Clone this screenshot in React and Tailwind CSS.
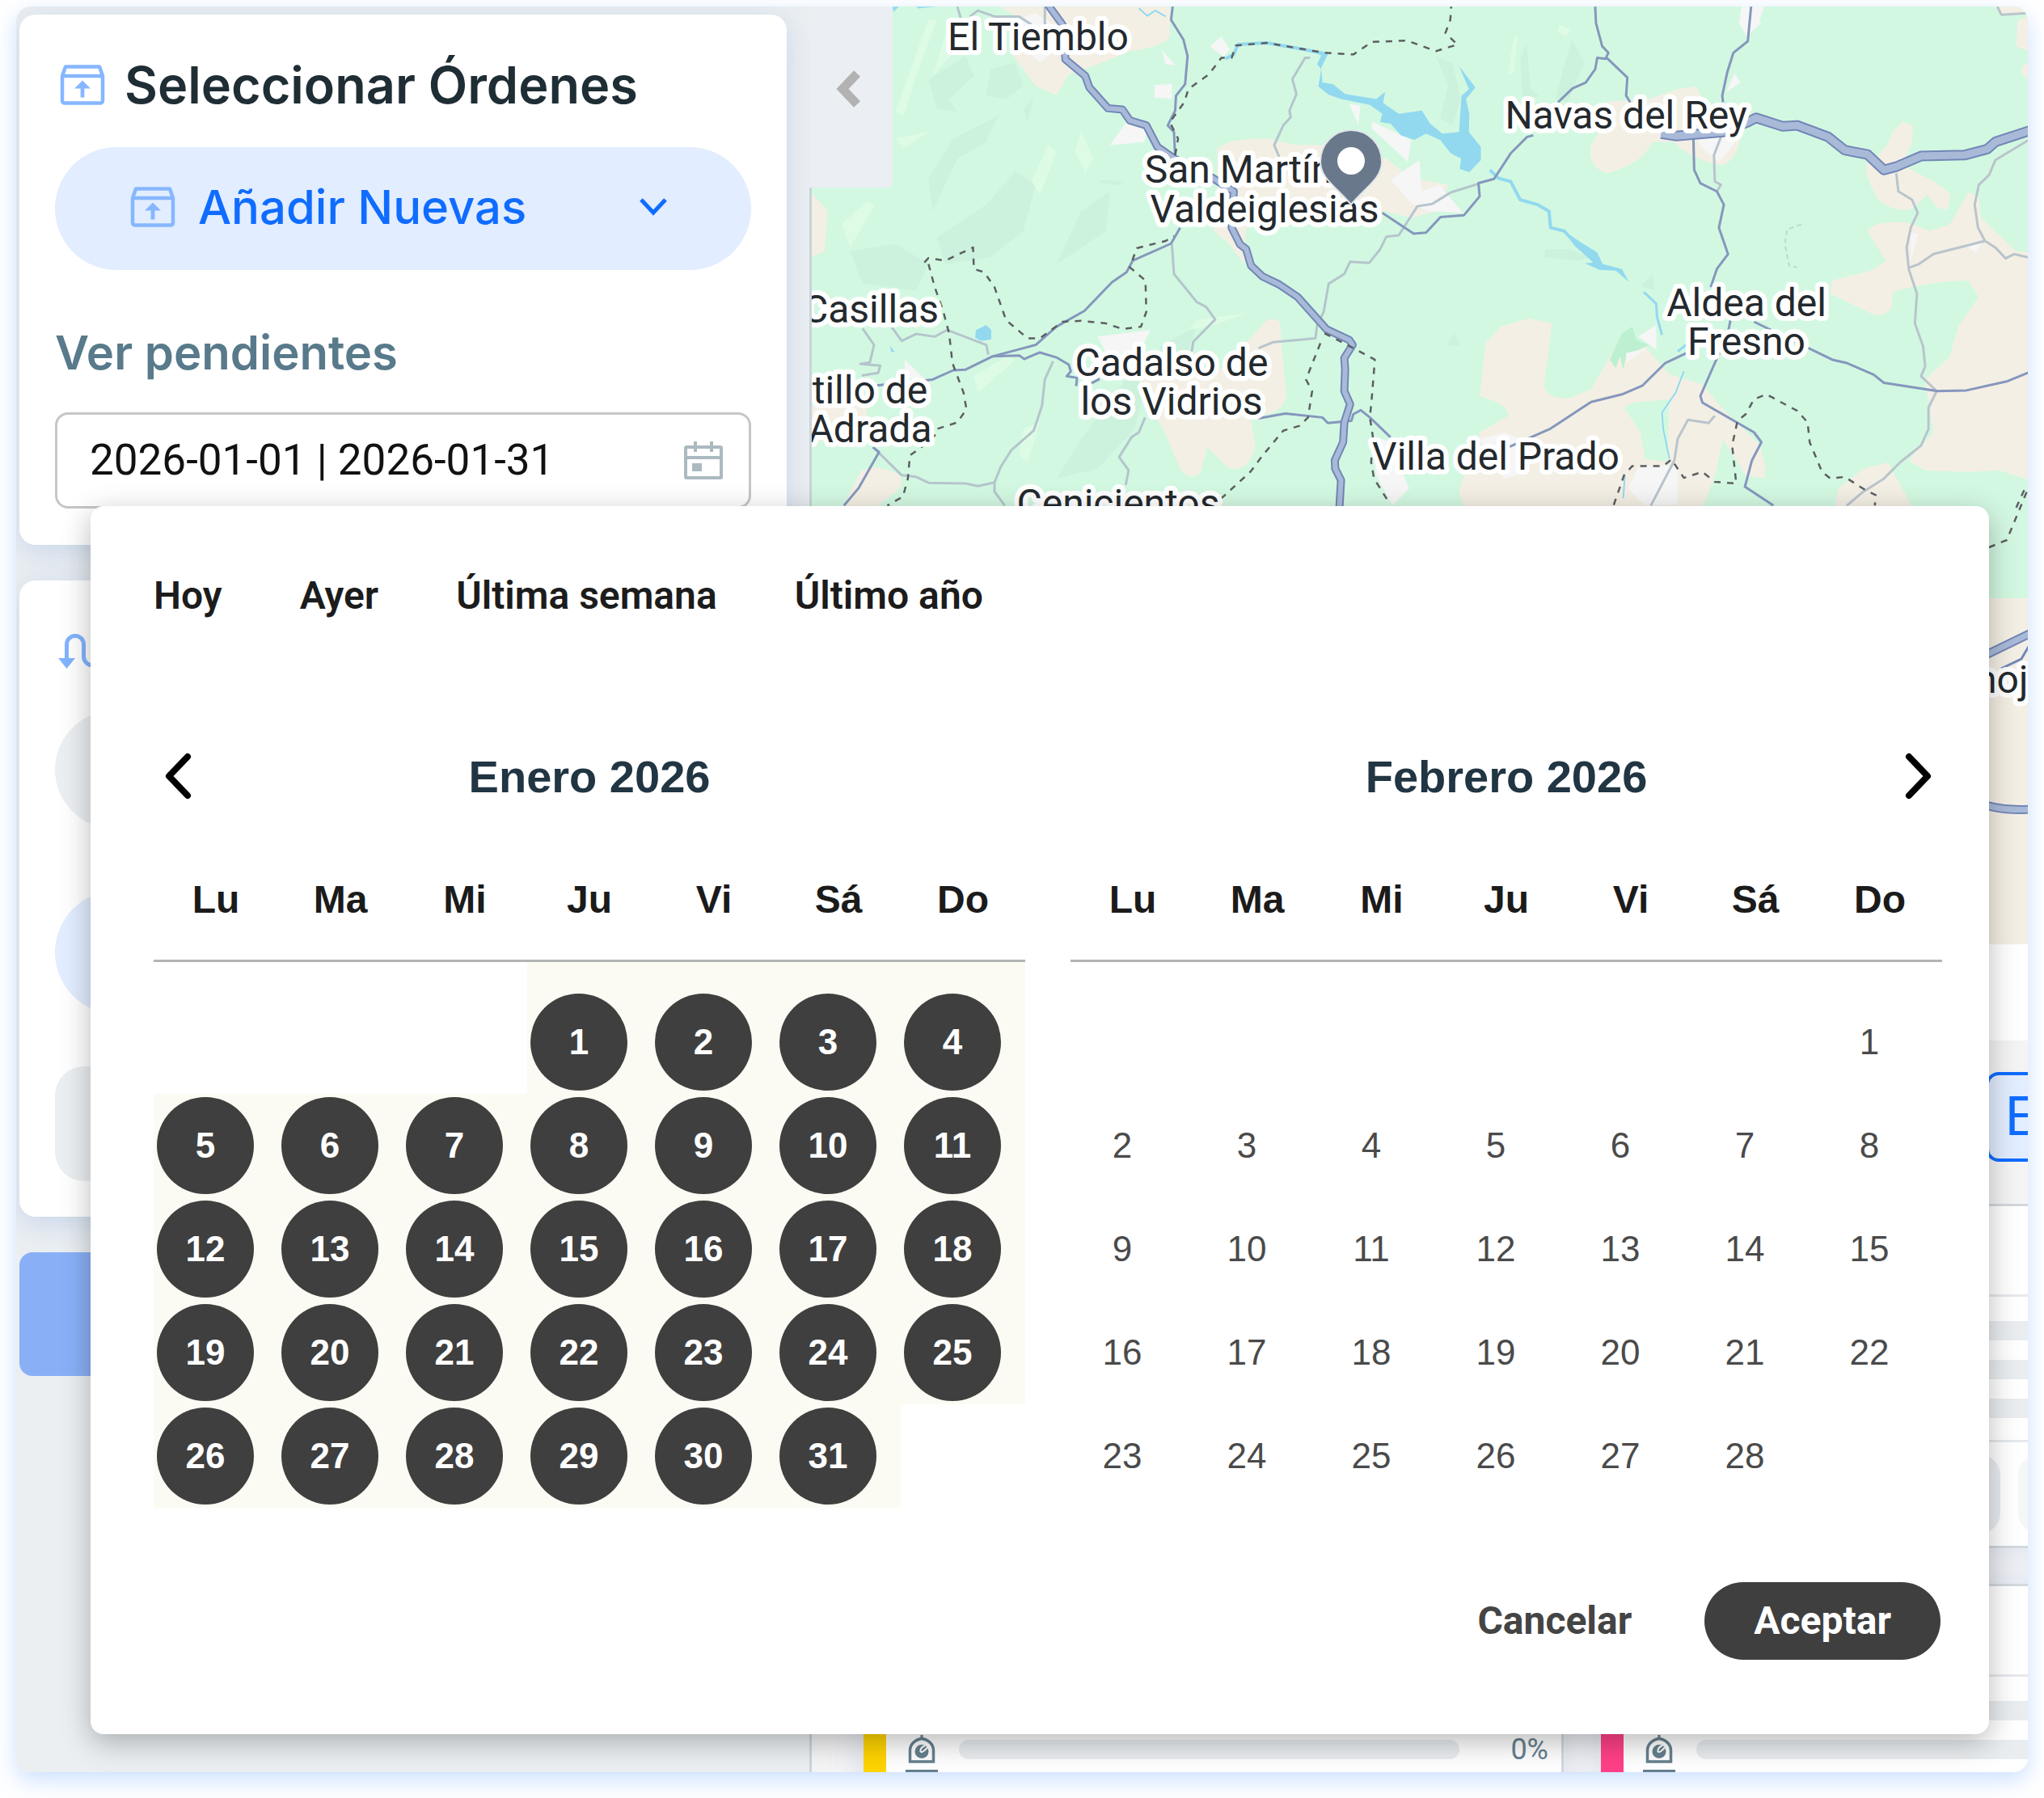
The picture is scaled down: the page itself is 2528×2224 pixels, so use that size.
const WEEKDAYS = ['Lu', 'Ma', 'Mi', 'Ju', 'Vi', 'Sá', 'Do'];

const MONTHS = [
  { name: 'Enero 2026', offset: 3, days: 31, selected: true, prev: true },
  { name: 'Febrero 2026', offset: 6, days: 28, selected: false, next: true },
];

const PRESETS = ['Hoy', 'Ayer', 'Última semana', 'Último año'];

const PLACES = [
  { x: 1284, y: 62, lines: ['El Tiemblo'] },
  { x: 2011, y: 159, lines: ['Navas del Rey'] },
  { x: 1532, y: 226, lines: ['San Martín'] },
  { x: 1564, y: 275, lines: ['Valdeiglesias'] },
  { x: 1077, y: 399, lines: ['Casillas'] },
  { x: 1076, y: 499, lines: ['tillo de', 'Adrada'] },
  { x: 1449, y: 465, lines: ['Cadalso de', 'los Vidrios'] },
  { x: 1383, y: 639, lines: ['Cenicientos'] },
  { x: 1850, y: 581, lines: ['Villa del Prado'] },
  { x: 2160, y: 391, lines: ['Aldea del', 'Fresno'] },
  { x: 2481, y: 857, lines: ['moja'] },
];

function weeksOf({ offset, days }) {
  const cells = [
    ...Array(offset).fill(null),
    ...Array.from({ length: days }, (_, i) => i + 1),
  ];
  while (cells.length % 7) cells.push(null);
  const weeks = [];
  for (let i = 0; i < cells.length; i += 7) weeks.push(cells.slice(i, i + 7));
  return weeks;
}

function BoxUpIcon() {
  return (
    <svg className="h-[50px] w-14 shrink-0" viewBox="0 0 56 50" fill="none" aria-hidden="true">
      <path d="M3 14 7 2.5h42L53 14v30.500a3 3 0 0 1-3 3H6a3 3 0 0 1-3-3Z" stroke="#86b7ff" strokeWidth="4.5" strokeLinejoin="round" />
      <path d="M3 14h50" stroke="#86b7ff" strokeWidth="4.500" />
      <path d="M28 19.500 38 29.500h-7.600V40.500h-4.800V29.500H18Z" fill="#86b7ff" />
    </svg>
  );
}

function CalendarIcon() {
  return (
    <svg className="h-[47px] w-12 shrink-0" viewBox="0 0 48 47" fill="none" stroke="#abbac1" strokeWidth="4" aria-hidden="true">
      <rect x="2" y="7" width="44" height="38" rx="1" />
      <path d="M2 20h44M14 0v13M34 0v13" />
      <rect x="10" y="27" width="12" height="10" fill="#abbac1" stroke="none" />
    </svg>
  );
}

function RouteIcon() {
  return (
    <svg className="h-11 w-16 shrink-0" viewBox="0 0 64 44" fill="none" aria-hidden="true">
      <path d="M10.500 32V14a10.500 10.500 0 0 1 21 0v15a11 11 0 0 0 22 0V6" stroke="#82b4ff" strokeWidth="5" />
      <path d="M0 31h21L10.500 44Z" fill="#82b4ff" />
    </svg>
  );
}

function WeightIcon() {
  return (
    <svg className="h-9 w-10 shrink-0" viewBox="0 0 40 36" fill="none" stroke="#65808e" aria-hidden="true">
      <path d="M5.500 33V19C5.500 12 11 6 20 4.500 29 6 34.500 12 34.500 19v14Z" strokeWidth="3.500" />
      <path d="M20 0v6" strokeWidth="3" />
      <circle cx="20" cy="20.500" r="8.500" fill="#65808e" stroke="none" />
      <path d="M24 13c-4 2-6 5-5.500 7.500 1.500 2 5-1 8.500-5" stroke="#fff" strokeWidth="2" />
    </svg>
  );
}

function ParcelIcon() {
  return (
    <svg className="h-[46px] w-10 shrink-0" viewBox="0 0 40 46" fill="none" stroke="#65808e" strokeWidth="4" aria-hidden="true">
      <path d="M2 2h36v42H2ZM2 16h36" />
    </svg>
  );
}

function RegionMap() {
  return (
    <svg className="block h-full w-full bg-[#d3f8e2]" viewBox="1004 8 1504 1160" preserveAspectRatio="xMinYMin slice" role="img" aria-label="Mapa">
      <g transform="translate(980 0) scale(0.5102 0.4082)">
        <g fill="#ccf1dd">
          <path d="M330 240 420 170 440 230 380 300 400 340 350 330Z" />
          <path d="M480 210 540 190 560 260 520 300 470 290Z" />
          <path d="M390 420 500 350 470 430 400 480 340 640 330 540Z" />
          <path d="M470 620 540 520 590 560 560 700 480 780 370 800 350 720Z" />
          <path d="M700 640 770 580 760 700 690 760 640 800Z" />
          <path d="M140 760 250 740 330 800 300 880 170 860Z" />
          <path d="M560 330 585 295 570 370ZM745 545l60 5-20 12-40-8Z" />
          <path d="M820 1130 870 1110 830 1300 740 1420 640 1450 700 1330Z" />
          <path d="M890 1050 980 990 960 1060 900 1100Z" />
          <path d="M1560 170 1600 190 1620 300 1600 380 1570 360 1590 260ZM1780 130 1790 270 1810 290 1770 310 1765 180ZM1890 120 1920 190 1880 310 1850 300 1870 200Z" />
          <path d="M1825 755l60 0 50 25-30 10-82-10ZM1605 1010l18 38-36-2ZM2085 830l5 48-34-10Z" />
        </g>
        <g fill="#defbe6">
          <path d="M250 340 330 60 350 60 300 230 270 350Z" />
          <path d="M370 110 400 70 390 160 340 230ZM620 440l20 20-40 130-20-40Z" />
          <path d="M250 420l80-20-60 50ZM120 680l60-70 20 10-60 130ZM700 400l30 80-20 40-25-60Z" />
          <path d="M440 1140l80-60 20 10-90 100ZM980 970l120-20-90 40-50 10ZM560 1300l40-20-30 120-20-20Z" />
          <path d="M1750 110l8 0-10 110-14 5ZM1860 75l25 15-10 20-20-15Z" />
        </g>
        <g fill="#f4efe4">
          <path d="M500 20H915V110Q900 140 820 155L740 195 670 225 640 288 590 260 560 210 530 160 560 60Z" />
          <path d="M47 585 85 640 78 760 47 778Z" />
          <path d="M1030 450Q1060 418 1150 420L1220 440 1290 440 1440 480 1500 540 1590 560 1560 640 1500 660 1440 640 1300 640 1100 690 1095 800 1060 740 1022 700 1030 620Z" />
          <path d="M1150 970Q1190 955 1183 1010L1197 1200Q1190 1260 1110 1262L1122 1350Q1110 1430 1060 1420L1005 1355 990 1430Q965 1460 940 1420L900 1300 850 1200 840 1150 1030 1130 1100 1040Z" />
          <path d="M120 1540 165 1430Q200 1400 260 1440 275 1470 240 1500L200 1540ZM47 1230l130-10 5 50-60 60-75 10Z" />
        </g>
        <g fill="#f6f6f7">
          <path d="M540 60 590 40 640 80 660 130 600 190 560 140ZM740 1020 868 1000 840 1070 760 1070ZM810 370 860 395 853 430 770 440ZM878 258l42-4v46l-42-5ZM895 150 928 198 905 195ZM1040 110 1060 150 1045 172 1013 140ZM1350 315 1377 320 1372 378ZM1405 368 1500 425 1492 490 1405 390ZM1450 545 1520 485 1525 580 1568 560 1625 645 1540 640 1500 615ZM1405 1320 1450 1340 1495 1480 1455 1532 1415 1440ZM272 1090l50 60-48-5Z" />
        </g>
        <path fill="#92d9ef" d="M1243 150 1300 160 1282 205 1285 250 1310 255 1340 285 1415 300 1437 278 1432 312 1470 345 1526 335 1546 375 1576 405 1616 400 1622 290 1640 270 1616 200 1656 265 1633 300 1641 345 1640 400 1669 445 1669 485 1641 522 1618 512 1621 480 1596 465 1571 425 1536 405 1508 424 1475 410 1450 375 1425 370 1430 345 1400 318 1330 300 1300 287 1275 262 1282 210 1272 195 1282 168ZM445 1000l25-15 12 15 0 28-25 5-14-10ZM237 1048l12 20-10-3ZM243 20l15 0-13 16ZM300 20h50l-45 6Z" />
      </g>

      <g transform="translate(1728 0) scale(0.5102 0.4082)">
        <g fill="#f4efe4">
          <path d="M515 305H600L680 270 725 262 740 300 800 400 830 420Q825 480 790 500 720 490 670 430L620 430Q590 500 505 525 460 500 470 440L490 400Z" />
          <path d="M1225 368 1250 380 1248 430 1225 500 1300 550 1340 585 1335 635 1310 630 1285 590 1245 635Q1190 640 1165 600 1130 530 1140 490 1190 460 1200 400Z" />
          <path d="M1140 700Q1160 665 1240 675L1290 700 1340 680 1385 582 1410 600 1415 660 1500 760 1532 765V1455L1460 1425 1380 1430 1280 1425 1240 1395 1300 1310 1280 1150 1340 1080 1360 990 1410 900 1385 850Q1300 850 1200 885L1200 930Q1180 965 1150 950L1050 890 1055 850 1150 820 1185 790Z" />
          <path d="M1455 20H1532V45H1465ZM1532 50 1505 60 1500 140 1532 155ZM1532 185 1515 200 1513 220 1532 245Z" />
          <path d="M320 965 375 980 365 1080 355 1170Q370 1215 420 1205L470 1180 520 1070 600 1050 660 1135 740 1165 790 1240 880 1350 893 1420 890 1450 845 1440 790 1330 770 1440 740 1540H160L150 1490 165 1430 200 1400 200 1310 270 1260Q270 1225 200 1200L215 1040 250 990Z" />
          <path d="M1060 1540 1070 1480 1130 1420 1190 1402 1250 1540Z" />
        </g>
        <path fill="#d3f8e2" d="M550 1235 570 1220 660 1210 655 1400 600 1390 590 1310Z" />
        <path fill="#bdf0d0" d="M570 990 545 1010 515 1090 530 1115 540 1080 548 1120 555 1080 610 1045 580 1030Z" />
        <g fill="#f6f6f7">
          <path d="M835 20h55l-12 40 4 10-35 40-18-40ZM818 222l14 28-34 30ZM720 410l110 5-50 75-40-40ZM1245 705l17 5-17 80ZM560 1480l25-65 95-5v120h-80ZM585 1020l43-35v75ZM555 1070l50-15-50 45ZM200 1330l60-20 60 30v90l-60 20ZM1372 740l50-10-20 35Z" />
        </g>
      </g>
      <path fill="#f4efe4" d="M2380 740H2508V1168H2380Z" />

      <g transform="translate(980 0) scale(0.5102 0.4082)" fill="none" strokeLinejoin="round">
        <g stroke="#b5c5cc" strokeWidth="3">
          <path vectorEffect="non-scaling-stroke" d="M400 20 408 55M430 50 450 32 490 50 550 50 580 75M612 20v60" />
          <path vectorEffect="non-scaling-stroke" d="M1255 175 1243 175 1212 240 1222 285 1205 335 1208 355 1190 380 1168 440 1180 475" />
          <path vectorEffect="non-scaling-stroke" d="M920 740 925 830 980 915 1003 930 1025 968 972 1035 968 1065" />
          <path vectorEffect="non-scaling-stroke" d="M1661 558 1596 583 1551 618 1515 625 1470 713 1440 717 1425 755 1398 797 1352 793 1338 830 1300 860 1288 945 1272 985 1268 1025 1165 1037 1130 1055" />
          <path vectorEffect="non-scaling-stroke" d="M170 995 198 1045 188 1098 165 1103 213 1108 208 1130 168 1138" />
          <path vectorEffect="non-scaling-stroke" d="M240 990 265 1033 300 1012 345 1020 375 1000 470 1045 475 1075" />
          <path vectorEffect="non-scaling-stroke" d="M632 1095 612 1150 605 1230 585 1305 530 1365 505 1415 490 1462 450 1473 420 1465 330 1463 300 1445 265 1440 200 1360M490 1462 490 1490 515 1532" />
          <path vectorEffect="non-scaling-stroke" d="M855 1265 840 1310 822 1325 792 1385 815 1425 808 1470" />
        </g>
        <g stroke="#92d9ef" strokeWidth="4">
          <path vectorEffect="non-scaling-stroke" d="M1050 178 1070 165 1080 135 1150 130 1220 145 1290 162" />
          <path vectorEffect="non-scaling-stroke" strokeWidth="2" d="M840 25 860 48 880 32 905 50" />
        </g>
        <g stroke="#8597bd" strokeWidth="3">
          <path vectorEffect="non-scaling-stroke" d="M922 20 918 60 948 120 958 170 952 255 930 290 928 335 910 380 925 400 928 475" />
          <path vectorEffect="non-scaling-stroke" d="M940 690 918 738 825 790 810 825 775 855 708 942 640 990 590 1045 485 1080 420 1120 390 1122 340 1150 205 1168" />
          <path vectorEffect="non-scaling-stroke" d="M485 1080 550 1077 562 1088 600 1068 640 1083 670 1105 675 1125 665 1140 690 1145 688 1170M720 1165 745 1148" />
          <path vectorEffect="non-scaling-stroke" d="M195 1355 210 1370 160 1480 125 1532" />
          <path vectorEffect="non-scaling-stroke" d="M1130 1268 1195 1253 1285 1265 1298 1282 1355 1275 1360 1255 1378 1243 1400 1265 1450 1325" />
        </g>
        <path vectorEffect="non-scaling-stroke" stroke="#7287b6" strokeWidth="10" d="M620 15 655 75 662 180 710 230 720 265 765 328 800 332 818 365 858 380 885 445 925 480 1020 540 1070 580 1065 690 1085 740 1100 755 1112 805 1140 838 1180 862 1225 900 1295 998 1350 1030 1358 1045 1338 1085 1340 1120 1338 1185 1352 1225 1338 1280 1335 1340 1315 1395 1316 1420 1330 1455 1326 1540" />
        <path vectorEffect="non-scaling-stroke" stroke="#a9bad9" strokeWidth="6" d="M620 15 655 75 662 180 710 230 720 265 765 328 800 332 818 365 858 380 885 445 925 480 1020 540 1070 580 1065 690 1085 740 1100 755 1112 805 1140 838 1180 862 1225 900 1295 998 1350 1030 1358 1045 1338 1085 1340 1120 1338 1185 1352 1225 1338 1280 1335 1340 1315 1395 1316 1420 1330 1455 1326 1540" />
        <g stroke="#5c5f62" strokeWidth="2.500" strokeDasharray="8 8">
          <path vectorEffect="non-scaling-stroke" d="M320 795 330 782 370 790 438 750 440 815 465 825 490 870 518 970 570 1025 600 1025 655 975 700 972 760 980 800 997 845 990 858 945 856 850 818 810 835 752 905 730 925 715" />
          <path vectorEffect="non-scaling-stroke" d="M330 800 345 870 365 940 380 1010 388 1100 415 1190 422 1240 400 1280 350 1300 345 1320 310 1358 285 1380 280 1450 268 1505 230 1532" />
          <path vectorEffect="non-scaling-stroke" d="M928 470 935 420 915 370 950 310 960 270 1010 225 1040 175 1065 175 1075 138 1150 130 1290 160 1360 165 1405 127 1490 123 1560 155 1612 135 1583 100 1595 60 1597 20" />
          <path vectorEffect="non-scaling-stroke" d="M1290 1010 1345 1045 1412 1090 1405 1200 1400 1265 1408 1330 1403 1400 1410 1450 1445 1520" />
          <path vectorEffect="non-scaling-stroke" d="M1280 1040 1245 1150 1260 1185 1250 1265 1230 1290 1190 1305 1140 1380 1110 1430 1040 1510" />
        </g>
      </g>

      <g transform="translate(1728 0) scale(0.5102 0.4082)" fill="none" strokeLinejoin="round">
        <g stroke="#b9c4cc" strokeWidth="3">
          <path vectorEffect="non-scaling-stroke" d="M785 415 768 470 770 550 785 560 775 580M1210 525 1215 580 1248 605 1262 645 1245 690 1235 750 1240 815 1260 890 1255 980 1275 1050 1280 1110 1270 1140 1308 1185 1288 1235 1288 1300 1270 1350 1220 1400 1180 1450 1130 1490 1090 1532" />
          <path vectorEffect="non-scaling-stroke" d="M1530 425 1450 485 1435 530 1410 560 1400 620 1408 690 1425 730 1450 750 1475 783 1495 770 1530 780M1425 730 1300 770 1265 800 1240 812" />
          <path vectorEffect="non-scaling-stroke" d="M770 1260 755 1282 705 1272 680 1330 672 1395 615 1532M1455 20 1465 45 1530 40" />
        </g>
        <g stroke="#92d9ef">
          <path vectorEffect="non-scaling-stroke" strokeWidth="4" d="M225 515 245 540 275 550 298 605 340 620 368 640 372 690 405 700 430 735 480 775" />
          <path vectorEffect="non-scaling-stroke" strokeWidth="3" d="M598 885 628 920 630 960 642 1015M700 1045 680 1065" />
          <path vectorEffect="non-scaling-stroke" strokeWidth="2" d="M695 1125 675 1190 642 1250 645 1300 660 1390M548 1510 552 1440" />
          <path fill="#92d9ef" stroke="none" d="M405 700 440 730 485 765 498 800 545 815 562 855 530 820 492 818 455 798 475 795 430 745Z" />
        </g>
        <g stroke="#8597bd" strokeWidth="3">
          <path vectorEffect="non-scaling-stroke" d="M480 20 482 70 497 140 512 160 505 178 485 175 480 210 457 250 425 268 390 310M505 172 558 235 555 290 565 310" />
          <path vectorEffect="non-scaling-stroke" d="M330 410 315 415 275 465 235 542 197 555 200 595 162 652 105 658 70 705 40 708 -36 645" />
          <path vectorEffect="non-scaling-stroke" d="M858 20 850 125 815 160 800 220 788 290 790 310" />
          <path vectorEffect="non-scaling-stroke" d="M718 410 720 515 735 555 775 580 792 620 780 690 802 770 775 815 760 870" />
          <path vectorEffect="non-scaling-stroke" d="M808 970 800 1020 770 1100 735 1200 740 1220 865 1310 883 1340 860 1395 843 1475 912 1532" />
          <path vectorEffect="non-scaling-stroke" d="M270 1355 370 1300 470 1218 545 1195 595 1168 650 1100 710 1065" />
          <path vectorEffect="non-scaling-stroke" d="M865 975 1055 1090 1090 1100 1155 1135 1180 1160 1310 1185 1380 1183 1480 1155 1532 1128" />
        </g>
        <path vectorEffect="non-scaling-stroke" stroke="#7287b6" strokeWidth="13" d="M640 405 675 412 790 400 850 370 870 357 935 383 970 380 1045 415 1085 455 1140 468 1180 515 1210 505 1270 473 1375 470 1430 452 1450 430 1540 393" />
        <path vectorEffect="non-scaling-stroke" stroke="#a9bad9" strokeWidth="9" d="M640 405 675 412 790 400 850 370 870 357 935 383 970 380 1045 415 1085 455 1140 468 1180 515 1210 505 1270 473 1375 470 1430 452 1450 430 1540 393" />
        <g stroke="#5c5f62" strokeWidth="2.500" strokeDasharray="8 8">
          <path vectorEffect="non-scaling-stroke" d="M525 1530 550 1440 570 1412 645 1412 665 1392 695 1448 740 1430 770 1460 822 1465 812 1350 825 1275 845 1255 865 1210 895 1195 970 1245 995 1280 1000 1340 1030 1430 1050 1450 1085 1445 1135 1485 1160 1500 1158 1532M1520 1485 1500 1540" />
        </g>
        <path vectorEffect="non-scaling-stroke" stroke="#b5dfc8" strokeWidth="2" strokeDasharray="6 4" d="M980 680 945 695 940 740 950 805 970 810" />
      </g>

      <g fill="none">
        <path d="M2460 677 2482 668 2508 605" stroke="#5c5f62" strokeWidth="2.500" strokeDasharray="8 8" />
        <path d="M2475 827 2500 815 2510 798" stroke="#7287b6" strokeWidth="3" />
        <path d="M2440 818 2512 783M2440 990Q2470 1004 2512 1001" stroke="#7287b6" strokeWidth="11" />
        <path d="M2440 818 2512 783M2440 990Q2470 1004 2512 1001" stroke="#a9bad9" strokeWidth="7" />
      </g>

      <g fontFamily="Roboto, sans-serif" fontSize="48" fill="#24292d" textAnchor="middle" stroke="#ffffff" strokeWidth="12" strokeLinejoin="round" paintOrder="stroke">
        {PLACES.map(({ x, y, lines }) =>
          lines.map((line, i) => (
            <text key={line} x={x} y={y + i * 48}>
              {line}
            </text>
          ))
        )}
      </g>

      <path d="M1671 161c-21 0-38 17-38 39 0 20 18 30 38 53 20-23 38-33 38-53 0-22-17-39-38-39Z" fill="#6a788c" stroke="#dfe6ea" strokeWidth="2" />
      <circle cx="1671" cy="199" r="17" fill="#fff" />
    </svg>
  );
}

function Month({ month }) {
  return (
    <section className="min-w-0 flex-1" aria-label={month.name}>
      <div className="grid h-16 grid-cols-[64px_1fr_64px] items-center">
        {month.prev ? (
          <button type="button" aria-label="Mes anterior" className="flex h-16 items-center justify-center">
            <svg className="h-16 w-10" viewBox="0 0 40 64" fill="none" stroke="#000" strokeWidth="8" strokeLinecap="round" strokeLinejoin="round">
              <path d="M30 7 7 31l23 24" />
            </svg>
          </button>
        ) : (
          <span />
        )}
        <h3 className="text-center text-[56px] leading-16 font-bold text-[#213543]">{month.name}</h3>
        {month.next && (
          <button type="button" aria-label="Mes siguiente" className="flex h-16 items-center justify-center">
            <svg className="h-16 w-10" viewBox="0 0 40 64" fill="none" stroke="#000" strokeWidth="8" strokeLinecap="round" strokeLinejoin="round">
              <path d="m11 7 23 24-23 24" />
            </svg>
          </button>
        )}
      </div>
      <table className="mt-[92px] w-full table-fixed border-separate border-spacing-0">
        <thead>
          <tr>
            {WEEKDAYS.map((d) => (
              <th key={d} scope="col" className="border-b-3 border-[#b3b5b5] p-0 pb-[46px] text-[48px] leading-14 font-bold text-[#1b1b1b]">
                {d}
              </th>
            ))}
          </tr>
        </thead>
        <tbody>
          {weeksOf(month).map((week, w) => (
            <tr key={w}>
              {week.map((day, i) => (
                <td
                  key={i}
                  className={`px-1 pb-1 ${w === 0 ? 'pt-[39px]' : 'pt-1'} ${day && month.selected ? 'bg-[#fcfbf3]' : ''}`}
                >
                  {day && (
                    <button
                      type="button"
                      className={`flex size-[120px] items-center justify-center rounded-full text-[44px] leading-none ${
                        month.selected ? 'bg-[#3f3f3f] font-bold text-white' : 'text-[#4a4a4a]'
                      }`}
                    >
                      {day}
                    </button>
                  )}
                </td>
              ))}
            </tr>
          ))}
        </tbody>
      </table>
    </section>
  );
}

function DateRangeDialog() {
  return (
    <div
      role="dialog"
      aria-label="Seleccionar fechas"
      className="absolute top-[618px] right-12 left-[92px] rounded-2xl bg-white pt-[83px] pr-[58px] pb-[92px] pl-[78px] font-['Liberation_Sans',sans-serif] shadow-[0_10px_36px_rgba(0,0,0,0.28)]"
    >
      <div className="flex gap-24 font-[Roboto,sans-serif]">
        {PRESETS.map((p) => (
          <button key={p} type="button" className="text-[48px] leading-14 font-semibold text-[#1c1c1c]">
            {p}
          </button>
        ))}
      </div>
      <div className="mt-[164px] flex items-start gap-14">
        {MONTHS.map((m) => (
          <Month key={m.name} month={m} />
        ))}
      </div>
      <div className="mt-[92px] flex items-center justify-end gap-8 pr-0.5 font-[Roboto,sans-serif] text-[48px] font-bold">
        <button type="button" className="h-24 px-[58px] text-[#444]">
          Cancelar
        </button>
        <button type="button" className="h-24 rounded-full bg-[#3f3f3f] px-[61px] text-white">
          Aceptar
        </button>
      </div>
    </div>
  );
}

function Sidebar() {
  return (
    <aside className="w-[984px] shrink-0 border-r-3 border-[#cdd4da] bg-[#ebeff2] pt-2.5 pr-7 pl-1 font-[Inter,sans-serif]">
      <section className="rounded-[20px] bg-white px-11 pt-[55px] pb-[45px] shadow-[0_8px_36px_rgba(120,155,215,0.3)]">
        <div className="flex h-16 items-center gap-6 pl-1.5">
          <BoxUpIcon />
          <h2 className="text-[63px] leading-16 font-semibold whitespace-nowrap text-[#1f2d35]">Seleccionar Órdenes</h2>
        </div>
        <button type="button" className="mt-[45px] flex h-[152px] w-full items-center gap-7 rounded-full bg-[#e2edff] pr-[103px] pb-1 pl-[93px] text-[#0f6cff]">
          <BoxUpIcon />
          <span className="text-[58px] leading-16 font-medium">Añadir Nuevas</span>
          <svg className="ml-auto h-6 w-9" viewBox="0 0 36 24" fill="none" stroke="currentColor" strokeWidth="5" aria-hidden="true">
            <path d="m3 3 15 16L33 3" />
          </svg>
        </button>
        <label htmlFor="pending-range" className="mt-[74px] block text-[58px] leading-14 font-semibold text-[#587a8b]">
          Ver pendientes
        </label>
        <div className="mt-[46px] flex h-[119px] items-center rounded-2xl border-3 border-[#c6c6c6] bg-white pr-8 pl-10">
          <input
            id="pending-range"
            type="text"
            defaultValue="2026-01-01 | 2026-01-31"
            className="min-w-0 flex-1 bg-transparent font-[Roboto,sans-serif] text-[53px] text-[#111] outline-none"
          />
          <CalendarIcon />
        </div>
      </section>
      <section className="mt-11 rounded-[20px] bg-white px-11 pt-[55px] pb-11 shadow-[0_8px_36px_rgba(120,155,215,0.3)]">
        <div className="flex h-16 items-center pl-1">
          <RouteIcon />
        </div>
        <div className="mt-[42px] h-[146px] rounded-full bg-[#ebeff2]" />
        <div className="mt-[77px] h-[152px] rounded-full bg-[#e2edff]" />
        <div className="mt-[65px] h-[142px] rounded-[36px] bg-[#ebeff2]" />
      </section>
      <div className="mt-11 h-[153px] rounded-2xl bg-[#89b0f7]" />
    </aside>
  );
}

function LoadRow({ icon }) {
  return (
    <div className="flex h-12 items-center">
      <div className="flex w-10 shrink-0 justify-center">{icon}</div>
      <div className="ml-[26px] h-6 flex-1 rounded-full bg-[#eaedf0]" />
      <span className="w-[110px] text-right text-[36px] leading-10 text-[#65808e]">0%</span>
    </div>
  );
}

function RouteCard({ stripe }) {
  return (
    <article className="flex w-[866px] shrink-0 border-y-3 border-r-3 border-[#d3d8dd] bg-white shadow-[0_0_40px_rgba(120,150,215,0.22)]">
      <div className={`w-7 shrink-0 ${stripe}`} />
      <div className="flex-1">
        <div className="h-28 border-b-3 border-[#e6e9ec]" />
        <div className="border-b-3 border-[#e6e9ec] pt-[18px] pr-4 pb-[15px] pl-6">
          <LoadRow icon={<WeightIcon />} />
          <LoadRow icon={<WeightIcon />} />
          <LoadRow icon={<ParcelIcon />} />
        </div>
        <div className="flex gap-[22px] py-4 pl-11">
          <div className="h-24 w-[422px] rounded-3xl bg-[#e9edf1]" />
          <div className="h-24 flex-1 rounded-3xl bg-[#f5f6f8]" />
        </div>
      </div>
    </article>
  );
}

export default function App() {
  return (
    <div className="h-screen overflow-hidden bg-white px-5 pt-2 pb-8">
      <main className="relative h-full rounded-[18px] shadow-[0_10px_28px_rgba(110,165,255,0.35)]">
        <div className="flex h-full overflow-hidden rounded-[18px]">
          <Sidebar />
          <div className="flex min-w-0 flex-1 flex-col font-[Roboto,sans-serif]">
            <div className="relative h-[1160px] shrink-0">
              <RegionMap />
              <button
                type="button"
                aria-label="Contraer panel"
                className="absolute top-0 -left-[3px] flex h-56 w-[103px] items-center justify-center rounded-br-lg bg-[#ebeef2] pb-5"
              >
                <svg className="-ml-2 h-12 w-8" viewBox="0 0 32 48" fill="none" stroke="#b2b2b2" strokeWidth="11" aria-hidden="true">
                  <path d="M27 5 9 24l18 19" />
                </svg>
              </button>
            </div>
            <div className="h-[119px] shrink-0 bg-white" />
            <div className="flex h-[202px] shrink-0 items-start justify-end bg-[#f4f4f4] pt-[39px]">
              <button type="button" className="h-[111px] w-[52px] overflow-hidden rounded-l-2xl border-4 border-r-0 border-[#0f6cff] bg-[#e2edff] pl-5 text-left text-[66px] leading-[96px] text-[#0f6cff]">
                E
              </button>
            </div>
            <div className="flex min-h-0 flex-1 flex-col gap-11 overflow-hidden bg-[#f5f5f6] pl-16">
              {[0, 1].map((row) => (
                <div key={row} className="flex shrink-0 gap-[46px]">
                  <RouteCard stripe="bg-[#ffd400]" />
                  <RouteCard stripe="bg-[#ff4088]" />
                </div>
              ))}
            </div>
          </div>
        </div>
        <DateRangeDialog />
      </main>
    </div>
  );
}
